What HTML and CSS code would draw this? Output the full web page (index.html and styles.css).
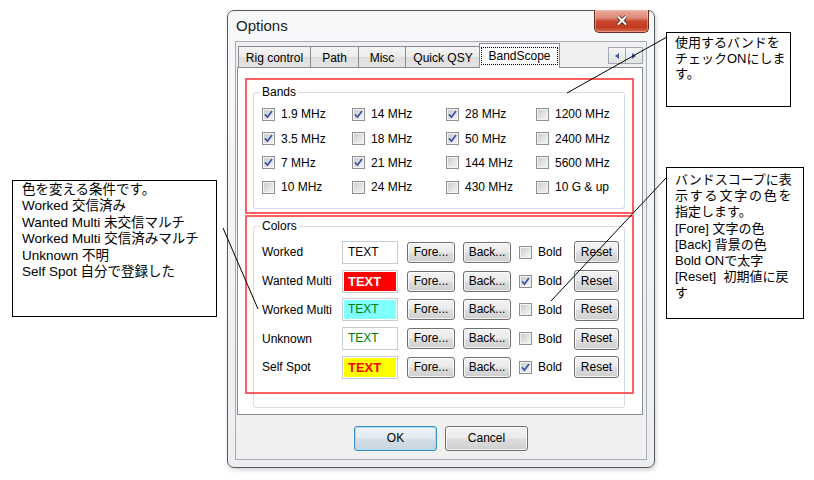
FILE: index.html
```html
<!DOCTYPE html>
<html lang="ja">
<head>
<meta charset="utf-8">
<title>Options</title>
<link rel="stylesheet" href="styles.css">
</head>
<body>
<div class="callout c-left">
  <div>色を変える条件です。</div>
  <div>Worked 交信済み</div>
  <div>Wanted Multi 未交信マルチ</div>
  <div>Worked Multi 交信済みマルチ</div>
  <div>Unknown 不明</div>
  <div>Self Spot 自分で登録した</div>
</div>

<div class="window">
  <div class="titlebar">
    <span class="title">Options</span>
    <div class="close">
      <svg width="12" height="11" viewBox="0 0 12 11"><path d="M2 1.5 L10 9.5 M10 1.5 L2 9.5" stroke="#4b2118" stroke-width="3.6" fill="none"/><path d="M2 1.5 L10 9.5 M10 1.5 L2 9.5" stroke="#ffffff" stroke-width="2" fill="none"/></svg>
    </div>
  </div>
  <div class="client">
    <div class="tabctl">
      <div class="tabstrip">
        <div class="tab w-rig">Rig control</div>
        <div class="tab w-path">Path</div>
        <div class="tab w-misc">Misc</div>
        <div class="tab w-qsy">Quick QSY</div>
        <div class="tab sel"><span class="focus">BandScope</span></div>
        <div class="arrows">
          <div class="arr"><svg width="4" height="6" viewBox="0 0 4 6"><path d="M4 0 L0 3 L4 6Z" fill="#3b5fb0"/></svg></div>
          <div class="arr"><svg width="4" height="6" viewBox="0 0 4 6"><path d="M0 0 L4 3 L0 6Z" fill="#3b5fb0"/></svg></div>
        </div>
      </div>
      <div class="panel">
        <div class="group bands">
          <span class="legend">Bands</span>
          <div class="band-grid">
            <label class="chk"><span class="cb on"><svg width="11" height="11" viewBox="0 0 11 11"><path d="M2 5.3 L4.4 8.2 L9 2" fill="none" stroke="#35509f" stroke-width="1.7"/></svg></span>1.9 MHz</label>
            <label class="chk"><span class="cb on"><svg width="11" height="11" viewBox="0 0 11 11"><path d="M2 5.3 L4.4 8.2 L9 2" fill="none" stroke="#35509f" stroke-width="1.7"/></svg></span>14 MHz</label>
            <label class="chk"><span class="cb on"><svg width="11" height="11" viewBox="0 0 11 11"><path d="M2 5.3 L4.4 8.2 L9 2" fill="none" stroke="#35509f" stroke-width="1.7"/></svg></span>28 MHz</label>
            <label class="chk"><span class="cb"></span>1200 MHz</label>

            <label class="chk"><span class="cb on"><svg width="11" height="11" viewBox="0 0 11 11"><path d="M2 5.3 L4.4 8.2 L9 2" fill="none" stroke="#35509f" stroke-width="1.7"/></svg></span>3.5 MHz</label>
            <label class="chk"><span class="cb"></span>18 MHz</label>
            <label class="chk"><span class="cb on"><svg width="11" height="11" viewBox="0 0 11 11"><path d="M2 5.3 L4.4 8.2 L9 2" fill="none" stroke="#35509f" stroke-width="1.7"/></svg></span>50 MHz</label>
            <label class="chk"><span class="cb"></span>2400 MHz</label>

            <label class="chk"><span class="cb on"><svg width="11" height="11" viewBox="0 0 11 11"><path d="M2 5.3 L4.4 8.2 L9 2" fill="none" stroke="#35509f" stroke-width="1.7"/></svg></span>7 MHz</label>
            <label class="chk"><span class="cb on"><svg width="11" height="11" viewBox="0 0 11 11"><path d="M2 5.3 L4.4 8.2 L9 2" fill="none" stroke="#35509f" stroke-width="1.7"/></svg></span>21 MHz</label>
            <label class="chk"><span class="cb"></span>144 MHz</label>
            <label class="chk"><span class="cb"></span>5600 MHz</label>

            <label class="chk"><span class="cb"></span>10 MHz</label>
            <label class="chk"><span class="cb"></span>24 MHz</label>
            <label class="chk"><span class="cb"></span>430 MHz</label>
            <label class="chk"><span class="cb"></span>10 G &amp; up</label>
          </div>
        </div>
        <div class="group colors">
          <span class="legend">Colors</span>
          <div class="color-grid">
            <span class="lbl">Worked</span>
            <div class="swatch"><div class="fill f-worked">TEXT</div></div>
            <button class="btn">Fore...</button>
            <button class="btn">Back...</button>
            <label class="chk"><span class="cb"></span>Bold</label>
            <button class="btn reset">Reset</button>

            <span class="lbl">Wanted Multi</span>
            <div class="swatch"><div class="fill f-wanted">TEXT</div></div>
            <button class="btn">Fore...</button>
            <button class="btn">Back...</button>
            <label class="chk"><span class="cb on"><svg width="11" height="11" viewBox="0 0 11 11"><path d="M2 5.3 L4.4 8.2 L9 2" fill="none" stroke="#35509f" stroke-width="1.7"/></svg></span>Bold</label>
            <button class="btn reset">Reset</button>

            <span class="lbl">Worked Multi</span>
            <div class="swatch"><div class="fill f-wmulti">TEXT</div></div>
            <button class="btn">Fore...</button>
            <button class="btn">Back...</button>
            <label class="chk"><span class="cb"></span>Bold</label>
            <button class="btn reset">Reset</button>

            <span class="lbl">Unknown</span>
            <div class="swatch"><div class="fill f-unknown">TEXT</div></div>
            <button class="btn">Fore...</button>
            <button class="btn">Back...</button>
            <label class="chk"><span class="cb"></span>Bold</label>
            <button class="btn reset">Reset</button>

            <span class="lbl">Self Spot</span>
            <div class="swatch"><div class="fill f-self">TEXT</div></div>
            <button class="btn">Fore...</button>
            <button class="btn">Back...</button>
            <label class="chk"><span class="cb on"><svg width="11" height="11" viewBox="0 0 11 11"><path d="M2 5.3 L4.4 8.2 L9 2" fill="none" stroke="#35509f" stroke-width="1.7"/></svg></span>Bold</label>
            <button class="btn reset">Reset</button>
          </div>
        </div>
      </div>
    </div>
    <div class="actions">
      <button class="btn big default">OK</button>
      <button class="btn big">Cancel</button>
    </div>
  </div>
</div>

<div class="redbox rb1"></div>
<div class="redbox rb2"></div>

<div class="callout c-tr">
  <div>使用するバンドを</div>
  <div>チェックONにしま</div>
  <div>す。</div>
</div>

<div class="callout c-br">
  <div>バンドスコープに表</div>
  <div class="spread">示する文字の色を</div>
  <div>指定します。</div>
  <div>[Fore] 文字の色</div>
  <div>[Back] 背景の色</div>
  <div>Bold ONで太字</div>
  <div>[Reset]&nbsp; 初期値に戻</div>
  <div>す</div>
</div>

<svg class="lines" width="814" height="480" viewBox="0 0 814 480">
  <line x1="666" y1="37.5" x2="567" y2="93" stroke="#000" stroke-width="1"/>
  <line x1="223" y1="228" x2="258" y2="309" stroke="#000" stroke-width="1"/>
  <line x1="666" y1="178" x2="551" y2="301" stroke="#000" stroke-width="1"/>
</svg>
</body>
</html>
```

FILE: styles.css
```css
* { box-sizing: border-box; }
html, body { margin: 0; padding: 0; }
body {
  width: 814px;
  height: 480px;
  background: #ffffff;
  font-family: "Liberation Sans", Arial, sans-serif;
  font-size: 12px;
  color: #000;
  position: relative;
  overflow: hidden;
}

/* ---------- window ---------- */
.window {
  position: absolute;
  left: 227px;
  top: 10px;
  width: 428px;
  height: 458px;
  border: 1px solid #55595e;
  border-radius: 7px;
  background: linear-gradient(#f7f8fa, #eceef1);
  display: flex;
  flex-direction: column;
  padding: 0 7px 7px;
  box-shadow: 1px 2px 4px rgba(0, 0, 0, 0.18);
}
.titlebar {
  display: flex;
  align-items: flex-start;
  height: 30px;
  margin: 0 -7px;
  padding-left: 8px;
}
.title {
  font-size: 15px;
  line-height: 30px;
  color: #1b1b1b;
}
.close {
  margin-left: auto;
  margin-right: 5px;
  margin-top: -1px;
  width: 55px;
  height: 23px;
  border: 1px solid #6a2b20;
  border-top: 0;
  border-radius: 0 0 5px 5px;
  background: linear-gradient(#e9aa9c 0%, #dd8a79 35%, #c9462c 52%, #c03b20 78%, #d86a4f 100%);
  box-shadow: inset 0 0 0 1px rgba(255, 210, 200, 0.45);
  display: flex;
  justify-content: center;
  padding-top: 5px;
}

.client {
  flex: 1;
  background: #f0f0f0;
  border: 1px solid #a8adb4;
  display: flex;
  flex-direction: column;
}

/* ---------- tabs ---------- */
.tabctl { margin: 1px 3px 0 1px; }
.tabstrip {
  display: flex;
  align-items: flex-end;
  height: 24px;
  padding-left: 1px;
}
.tab {
  height: 21px;
  border: 1px solid #898c95;
  border-bottom: 0;
  background: linear-gradient(#f4f4f4 0%, #ebebeb 50%, #dddddd 51%, #e5e5e5 100%);
  margin-left: -1px;
  text-align: center;
  padding-top: 2px;
  line-height: 18px;
  white-space: nowrap;
}
.w-rig { width: 73px; margin-left: 0; }
.w-path { width: 49px; }
.w-misc { width: 48px; }
.w-qsy { width: 76px; }
.tab.sel {
  width: 81px;
  height: 25px;
  background: #ffffff;
  margin-left: -2px;
  margin-bottom: -1px;
  position: relative;
  z-index: 1;
  padding-top: 3px;
}
.focus {
  display: inline-block;
  border: 1px dotted #000;
  line-height: 16px;
  padding: 0 6px;
}
.arrows {
  margin-left: auto;
  align-self: flex-start;
  margin-top: 4px;
  display: flex;
}
.arr {
  width: 18px;
  height: 17px;
  border: 1px solid #a3a7ae;
  background: linear-gradient(#f6f6f6, #e2e2e2);
  margin-left: -1px;
  display: flex;
  align-items: center;
  justify-content: center;
}
.panel {
  height: 348px;
  border: 1px solid #898c95;
  background: #ffffff;
}

/* ---------- group boxes ---------- */
.group {
  position: relative;
  border: 1px solid #d5dce4;
  border-radius: 3px;
  margin: 0 17px 0 15px;
}
.legend {
  position: absolute;
  top: -8px;
  left: 6px;
  background: #fff;
  padding: 0 2px;
  line-height: 14px;
}
.bands {
  margin-top: 24px;
  height: 117px;
  padding: 9px 0 0 8px;
}
.colors {
  margin-top: 17px;
  height: 182px;
  padding: 11px 0 0 8px;
}
.band-grid {
  display: grid;
  grid-template-columns: 90px 94px 90px 1fr;
  grid-auto-rows: 24.4px;
  align-items: center;
}
.color-grid {
  display: grid;
  grid-template-columns: 72px 57px 48px 48px 47px 45px;
  column-gap: 8px;
  grid-auto-rows: 28.75px;
  align-items: center;
}
.lbl { white-space: nowrap; }

.chk {
  display: flex;
  align-items: center;
  gap: 6px;
  white-space: nowrap;
}
.cb {
  width: 13px;
  height: 13px;
  flex: none;
  border: 1px solid #8e8f8f;
  background: linear-gradient(135deg, #c6c9ce 0%, #e2e3e5 55%, #f8f8f8 100%);
  box-shadow: inset 0 0 0 1px #f3f3f3;
  display: flex;
  align-items: center;
  justify-content: center;
}

.swatch {
  width: 56px;
  height: 23px;
  border: 1px solid #c9cdd3;
  padding: 1px;
  background: #fff;
}
.fill {
  height: 100%;
  padding-left: 4px;
  line-height: 19px;
  font-size: 12px;
}
.f-worked { background: #ffffff; color: #000000; }
.f-wanted { background: #ff0000; color: #ffffff; font-weight: bold; font-size: 13px; }
.f-wmulti { background: #80ffff; color: #008000; }
.f-unknown { background: #ffffff; color: #008000; }
.f-self { background: #ffff00; color: #ff0000; font-weight: bold; font-size: 13px; }

/* ---------- buttons ---------- */
.btn {
  height: 21px;
  margin: 0;
  padding: 0;
  border: 1px solid #707070;
  border-radius: 3px;
  background: linear-gradient(#f2f2f2 0%, #ebebeb 48%, #dddddd 52%, #cfcfcf 100%);
  box-shadow: inset 0 0 0 1px rgba(255, 255, 255, 0.75);
  font-family: "Liberation Sans", Arial, sans-serif;
  font-size: 12px;
  color: #000;
  text-align: center;
  line-height: 19px;
}
.reset { height: 22px; }
.actions {
  display: flex;
  justify-content: center;
  gap: 8px;
  margin-top: 11px;
}
.big {
  width: 83px;
  height: 25px;
  line-height: 23px;
}
.default {
  border-color: #3c8fc8;
  background: linear-gradient(#eef4f8 0%, #e2eaf0 48%, #d3dee6 52%, #c8d5de 100%);
  box-shadow: inset 0 0 0 1px #a8dcf5;
}

/* ---------- annotations ---------- */
.redbox {
  position: absolute;
  left: 245px;
  width: 389px;
  border: 2px solid #ff5f5f;
  pointer-events: none;
}
.rb1 { top: 78px; height: 136px; }
.rb2 { top: 215px; height: 179px; }

.callout {
  position: absolute;
  border: 1px solid #000;
  background: #fff;
  font-family: "Liberation Sans", "Noto Sans CJK JP", sans-serif;
  font-size: 13.5px;
  color: #000;
  white-space: nowrap;
}
.c-left {
  left: 12px;
  top: 180px;
  width: 205px;
  height: 137px;
  padding: 1px 0 0 9px;
  line-height: 16.4px;
}
.c-tr {
  left: 666px;
  top: 32px;
  width: 125px;
  height: 75px;
  padding: 2px 0 0 8px;
  line-height: 15.5px;
  font-size: 13px;
}
.c-br {
  left: 666px;
  top: 167px;
  width: 138px;
  height: 152px;
  padding: 4px 0 0 8px;
  line-height: 16.2px;
  font-size: 13px;
}
.spread { letter-spacing: 1.8px; }

.lines {
  position: absolute;
  left: 0;
  top: 0;
  pointer-events: none;
}
```
